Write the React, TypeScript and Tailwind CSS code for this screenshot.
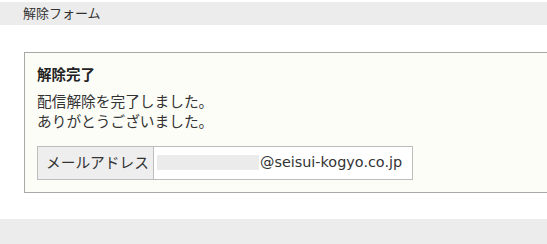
export default function App() {
	return (
		<div
			className="w-[547px] h-[244px] overflow-hidden bg-white text-[#333]"
			style={{ fontFamily: '"DejaVu Sans", "Noto Sans CJK JP", sans-serif' }}
		>
			<div className="mt-[2px] h-[23px] bg-[#ececec] pl-[23px] text-[13px] leading-[23px] text-[#333]">
				解除フォーム
			</div>
			<div className="h-[27px]" />
			<div className="ml-[24px] w-[540px] border border-r-0 border-[#a8a8a8] bg-[#fdfdf8] pl-[12px] pt-[12px] pb-[12px]">
				<div className="text-[14.5px] font-bold leading-[20px] text-[#222]">解除完了</div>
				<div className="mt-[7px] text-[14.7px] leading-[20px]">
					<p>配信解除を完了しました。</p>
					<p>ありがとうございました。</p>
				</div>
				<table className="mt-[14px] border-collapse text-[14px]">
					<tbody>
						<tr className="h-[33px]">
							<th className="w-[116px] whitespace-nowrap border border-[#bdbdbd] bg-[#eeeeee] pl-[8px] pr-[4px] text-left text-[14.7px] font-normal">
								メールアドレス
							</th>
							<td className="w-[259px] border border-[#bdbdbd] bg-white pl-[3px]">
								<div className="flex items-center">
									<span className="inline-block h-[15px] w-[102px] bg-[#ebebeb]" />
									<span className="ml-[1px] text-[14.4px]">@seisui-kogyo.co.jp</span>
								</div>
							</td>
						</tr>
					</tbody>
				</table>
			</div>
			<div className="h-[26px]" />
			<div className="h-[26px] bg-[#ececec]" />
		</div>
	);
}
